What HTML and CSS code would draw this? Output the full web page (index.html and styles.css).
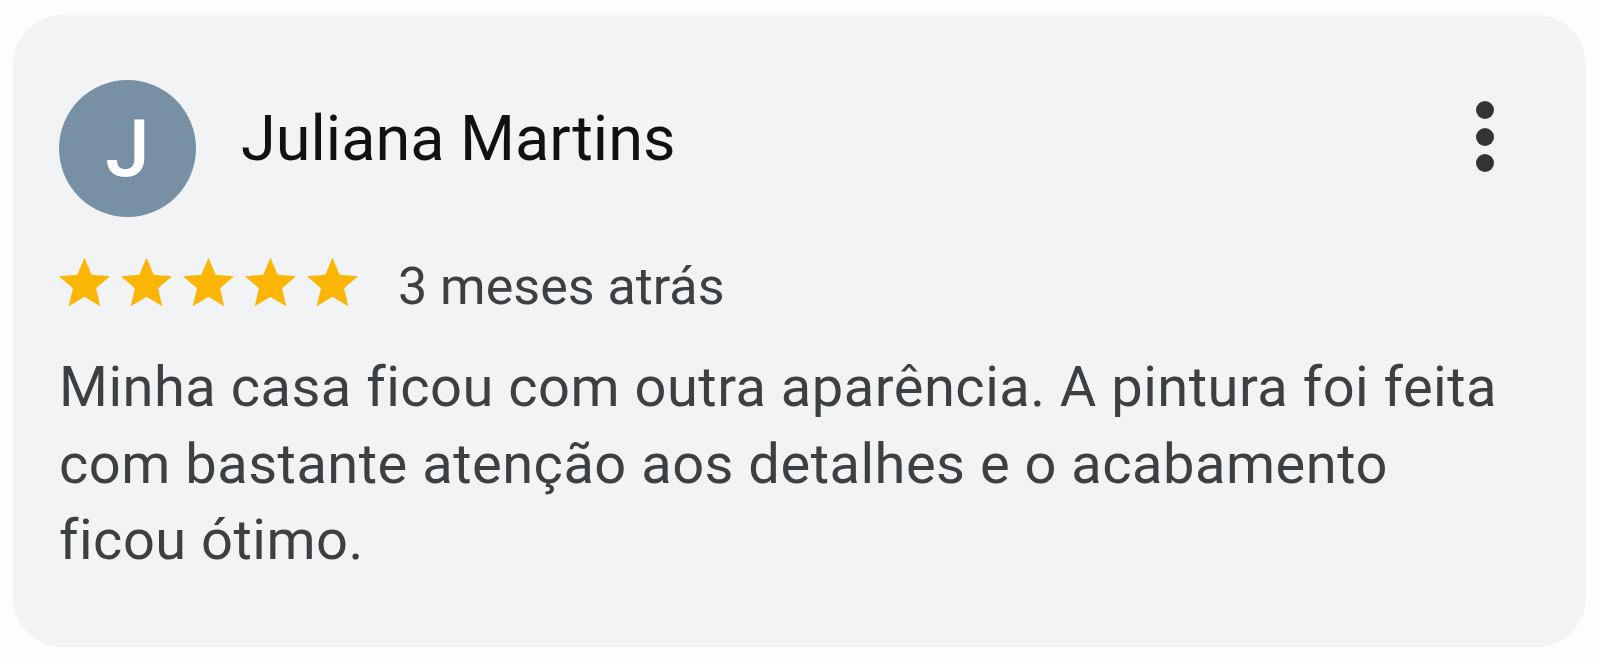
FILE: index.html
```html
<!DOCTYPE html>
<html lang="pt-BR">
<head>
    <meta charset="UTF-8">
    <meta name="viewport" content="width=device-width, initial-scale=1.0">
    <title>Avaliação</title>
    <link rel="stylesheet" href="styles.css">
</head>
<body>
    <div class="review-card">
        <div class="review-header">
            <div class="avatar">J</div>
            <div class="author-name">Juliana Martins</div>
            <button class="more-button" aria-label="Mais opções">
                <span class="dot"></span>
                <span class="dot"></span>
                <span class="dot"></span>
            </button>
        </div>

        <div class="rating-row">
            <div class="stars">
                <svg class="star" viewBox="2 2 20 19"><path d="M12 17.27L18.18 21l-1.64-7.03L22 9.24l-7.19-.61L12 2 9.19 8.63 2 9.24l5.46 4.73L5.82 21z"/></svg>
                <svg class="star" viewBox="2 2 20 19"><path d="M12 17.27L18.18 21l-1.64-7.03L22 9.24l-7.19-.61L12 2 9.19 8.63 2 9.24l5.46 4.73L5.82 21z"/></svg>
                <svg class="star" viewBox="2 2 20 19"><path d="M12 17.27L18.18 21l-1.64-7.03L22 9.24l-7.19-.61L12 2 9.19 8.63 2 9.24l5.46 4.73L5.82 21z"/></svg>
                <svg class="star" viewBox="2 2 20 19"><path d="M12 17.27L18.18 21l-1.64-7.03L22 9.24l-7.19-.61L12 2 9.19 8.63 2 9.24l5.46 4.73L5.82 21z"/></svg>
                <svg class="star" viewBox="2 2 20 19"><path d="M12 17.27L18.18 21l-1.64-7.03L22 9.24l-7.19-.61L12 2 9.19 8.63 2 9.24l5.46 4.73L5.82 21z"/></svg>
            </div>
            <span class="review-date">3 meses atrás</span>
        </div>

        <p class="review-text">Minha casa ficou com outra aparência. A pintura foi feita com bastante atenção aos detalhes e o acabamento ficou ótimo.</p>
    </div>
</body>
</html>
```

FILE: styles.css
```css
body {
    margin: 0;
    padding: 15px 14px 17px 13px;
    background-color: #fdfdfd;
    font-family: Roboto, "Liberation Sans", sans-serif;
}

.review-card {
    box-sizing: border-box;
    height: 632px;
    background-color: #f2f3f5;
    border-radius: 50px;
    padding: 65px 60px 0 46px;
}

.review-header {
    display: flex;
    align-items: flex-start;
}

.avatar {
    width: 137px;
    height: 137px;
    border-radius: 50%;
    background-color: #7890a3;
    color: #fff;
    font-size: 80px;
    font-weight: 500;
    display: flex;
    justify-content: center;
    align-items: center;
    flex-shrink: 0;
}

.author-name {
    margin: 27px 0 0 45px;
    font-size: 63px;
    line-height: 63px;
    color: #111;
}

.more-button {
    margin: 21px 32px 0 auto;
    background: none;
    border: none;
    padding: 0;
    display: flex;
    flex-direction: column;
    gap: 8.5px;
}

.dot {
    width: 18px;
    height: 18px;
    border-radius: 50%;
    background-color: #333;
}

.rating-row {
    display: flex;
    align-items: flex-start;
    margin-top: 40px;
}

.stars {
    display: flex;
    gap: 11px;
}

.star {
    width: 51px;
    height: 50px;
    fill: #fab505;
}

.review-date {
    margin: 5px 0 0 40px;
    font-size: 52px;
    line-height: 50px;
    color: #3c4043;
}

.review-text {
    margin: 37px 0 0 0;
    max-width: 1455px;
    font-size: 56px;
    line-height: 76.5px;
    letter-spacing: 0.5px;
    color: #3c4043;
}
```
